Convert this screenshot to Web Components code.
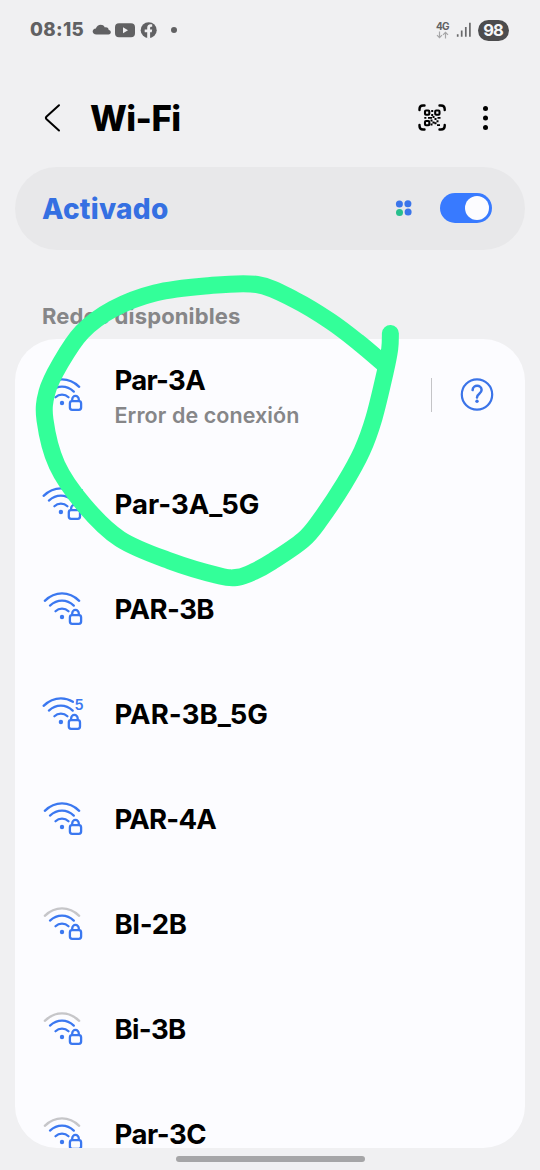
<!DOCTYPE html>
<html lang="es">
<head>
<meta charset="utf-8">
<title>Wi-Fi</title>
<style>
html,body{margin:0;padding:0;background:#f0f0f2}
body{font-family:Inter,"Noto Sans",sans-serif;overflow:hidden}
</style>
</head>
<body>
<wifi-screen></wifi-screen>
<script>
const define = (name, html, init) => customElements.define(name, class extends HTMLElement {
  connectedCallback() {
    if (this.shadowRoot) return;
    const t = document.createElement('template');
    t.innerHTML = typeof html === 'function' ? html(this) : html;
    this.attachShadow({ mode: 'open' }).append(t.content.cloneNode(true));
    if (init) init(this);
  }
});

/* A one-line label whose tracking is adjusted to take up the given width. */
define('fit-label', `<style>
:host{display:block;white-space:nowrap}
span{display:inline-block;white-space:nowrap}
</style><span><slot></slot></span>`, el => {
  const span = el.shadowRoot.querySelector('span');
  const want = +el.getAttribute('width');
  const n = el.textContent.length;
  const gap = (want - span.getBoundingClientRect().width) / n;
  span.style.letterSpacing = gap.toFixed(3) + 'px';
});

define('status-bar', `<style>
:host{display:flex;align-items:center;height:60px;box-sizing:border-box;padding:0 31px 0 30px;color:#616163}
fit-label{font-size:18.7px;font-weight:800;line-height:24px;width:54px}
.apps{margin-left:8px;flex:none}
.net{display:flex;flex-direction:column;align-items:center;margin-left:auto;width:14px}
.net fit-label{font-size:10px;font-weight:700;line-height:10px;width:13px}
.bars{margin-left:5px}
.battery{margin-left:6px;width:31.500px;height:21px;border-radius:11px;background:#4c4c4e;color:#f6f6f8;display:flex;justify-content:center;align-items:center}
.battery fit-label{font-size:16.500px;font-weight:700;line-height:21px;width:20px}
</style>
<fit-label width="54">08:15</fit-label>
<svg class="apps" width="90" height="24" viewBox="92 18 90 24" fill="#616163">
<path d="M96.5 34.500c-5 0-5-5.500-.6-5.900 1-4.200 7-5.200 9-1.200 2.500-.4 3.800 1 3.800 2.600 3 .5 2.700 4.500-.2 4.500z"/>
<path fill-rule="evenodd" d="M119 23.200h12q4 0 4 4v6q0 4-4 4h-12q-4 0-4-4v-6q0-4 4-4zM123 27.200v6l5-3z"/>
<circle cx="148.700" cy="30.200" r="8"/>
<path d="M147.200 38.500v-6.200h-2.500v-2.900h2.500v-1.500c0-2.900 1.700-4.100 5-3.500v2.400c-1.700-.1-2.100.3-2.100 1.300v1.300h2.100l-.5 2.900h-1.600v6.200z" fill="#f0f0f2"/>
<circle cx="174" cy="30" r="3"/>
</svg>
<div class="net"><fit-label width="13">4G</fit-label>
<svg width="14" height="8" viewBox="0 0 14 8" fill="none" stroke="#a6a6a8" stroke-width="1.200"><path d="M3.500.5v6M1 4.200l2.500 2.500L6 4.200M9.500 7.500v-6M7 3.800l2.500-2.500L12 3.800"/></svg></div>
<svg class="bars" width="17" height="18" viewBox="455 21 17 18" stroke-width="1.700" stroke="#68686a"><path d="M457.700 36.800v-2.600M461.700 36.800v-6.300M465.800 36.800V27M469.900 36.800V22.800"/></svg>
<div class="battery"><fit-label width="19.500">98</fit-label></div>`);

define('title-bar', `<style>
:host{display:flex;align-items:center;height:106.500px;padding:10px 40px 0 40px;box-sizing:border-box;color:#000}
fit-label{font-size:34.800px;font-weight:800;line-height:44px;margin-left:19px;width:92px}
.qr{margin-left:auto}
.more{margin-left:21px}
svg{flex:none}
div{display:flex;align-items:center;width:100%;height:44px}
</style><div>
<svg width="31" height="34" viewBox="40 101 31 34" fill="none" stroke="#000" stroke-width="2" stroke-linecap="round" stroke-linejoin="round"><path d="M59 105.200 46.600 116.500q-1.400 1.400 0 2.800L59 130.500"/></svg>
<fit-label width="90.500">Wi-Fi</fit-label>
<svg class="qr" width="34" height="34" viewBox="415 101 34 34" fill="none" stroke="#000" stroke-width="2.400" stroke-linecap="round">
<path d="M419.500 110v-1q0-3.500 3.500-3.500h1.500M439.500 105.500h1.500q3.700 0 3.700 3.500v1M444.700 125v1q0 3.500-3.700 3.500h-1.500M424.500 129.500H423q-3.500 0-3.500-3.500v-1"/>
<g stroke-width="2.100"><rect x="425" y="110.500" width="4.300" height="4.300" rx="1"/><rect x="435.200" y="110.500" width="4.300" height="4.300" rx="1"/><rect x="425" y="121" width="4.300" height="4.300" rx="1"/></g>
<g fill="#000" stroke="none"><path d="M431.200 110h2v2h-2zM431.200 114h2v2h-2zM424.300 117h2v1.800h-2zM428 117h4v1.800h-4zM432.500 116h2v2h-2zM434.500 118h2v2h-2zM437.500 117h3v1.800h-3zM430.500 119.500h2v2h-2zM432.500 121.500h2v2h-2zM436.500 120.300h2v2h-2zM434.500 122.300h2v2h-2zM430.500 123.500h2v2h-2zM437 124.200h3v1.800h-3z"/></g></svg>
<svg class="more" width="30" height="34" viewBox="470 101 30 34"><circle cx="485.500" cy="108.500" r="2.500"/><circle cx="485.500" cy="118" r="2.500"/><circle cx="485.500" cy="127.400" r="2.500"/></svg>
</div>`);

define('toggle-switch', `<style>
:host{display:flex;align-items:center;justify-content:flex-end;width:52.500px;height:30px;box-sizing:border-box;padding-right:3px;border-radius:15px;background:#387aff}
i{display:block;width:24px;height:24px;border-radius:50%;background:#fcfcff}
</style><i></i>`);

define('wifi-state', `<style>
:host{display:flex;align-items:center;margin:0 15px;height:83px;border-radius:41.500px;background:#e8e8ea;padding:0 33px 0 27px;box-sizing:border-box;color:#3570e2}
fit-label{font-size:28px;font-weight:800;line-height:40px;width:130px;padding-top:1px}
svg{margin-left:auto;margin-right:27px}
</style><fit-label width="126.500">Activado</fit-label>
<svg width="18" height="18" viewBox="395 199 18 18" fill="#3b75ea"><circle cx="399.400" cy="203.900" r="3.500"/><circle cx="407.900" cy="203.700" r="3.500"/><circle cx="399.500" cy="212.400" r="3.500" fill="#27bf8d"/><circle cx="408.100" cy="212.100" r="3.500"/></svg>
<toggle-switch></toggle-switch>`);

define('wifi-icon', el => {
  const five = el.hasAttribute('five');
  const top = el.hasAttribute('weak') ? '#c6c6c9' : '#3b78f0';
  return `<style>:host{display:block;width:46px;height:42px;flex:none}svg{display:block;overflow:visible}text{font:600 14.500px Inter,sans-serif}</style>
<svg width="46" height="42" viewBox="40 588 46 42" fill="none" stroke="#3b78f0" stroke-width="2.300" stroke-linecap="round" stroke-linejoin="round">
<g transform="translate(${five ? -1.1 : 0} 0)">
<path stroke="${top}" d="${five ? 'M44.700 600.800Q52.500 593.400 62 593.400Q68.500 593.400 74 596.800' : 'M44.800 600.800Q52.500 593.400 62 593.400T79.200 600.800'}"/>
<path d="M50 605.600Q55.500 600.700 62 600.700T73.800 605.600M55.500 611.300Q58.200 608.600 62 608.600T68.500 611.300"/>
<circle cx="62" cy="617" r="2.200" fill="#3b78f0" stroke="none"/>
<rect x="69.900" y="615.200" width="11.200" height="8.600" rx="2.200"/>
<path d="M72.200 614.800v-1.400a3.300 3.500 0 0 1 6.600 0v1.400"/></g>
${five ? '<text x="74.600" y="605" fill="#3b78f0" stroke="none">5</text>' : ''}
</svg>`;
});

define('wifi-row', el => `<style>
:host{display:flex;align-items:center;height:105px;box-sizing:border-box;padding:0 31px 0 25px;color:#000}
:host([tall]){height:112.500px}
.text{margin-left:28.500px;display:flex;flex-direction:column;flex:1}
.name{font-size:27.500px;font-weight:650;line-height:24px}
:host([tall]) .text{margin-top:11px;gap:6px}
</style>
<wifi-icon ${el.hasAttribute('five') ? 'five' : ''} ${el.hasAttribute('weak') ? 'weak' : ''}></wifi-icon>
<div class="text"><fit-label class="name" width="${el.getAttribute('w')}">${el.getAttribute('name')}</fit-label><slot></slot></div>
<slot name="end"></slot>`);

define('help-button', `<style>
:host{display:flex;align-items:center}
i{width:1px;height:34px;background:#c4c4c7;margin-right:28px;flex:none}
svg{display:block;flex:none}
</style><i></i>
<svg width="34" height="35" viewBox="460 377.500 34 35" fill="none" stroke="#3b74e8" stroke-width="2.200" stroke-linecap="round"><circle cx="477" cy="395" r="15.200"/><path stroke-width="2.500" d="M472.600 390.600c.2-5.800 9-5.600 9 0 0 3.700-4.600 3.500-4.600 7.300"/><circle cx="477" cy="401.700" r="1.700" fill="#3b74e8" stroke="none"/></svg>`);

define('network-list', `<style>
:host{display:block;margin:0 15px;height:809px;border-radius:42px;overflow:hidden;background:#fcfcff;width:509.500px}
.error{font-size:21.500px;font-weight:600;line-height:35px;color:#868688}
</style>
<wifi-row tall name="Par-3A" w="90.500"><fit-label class="error" width="185">Error de conexión</fit-label><help-button slot="end"></help-button></wifi-row>
<wifi-row five name="Par-3A_5G" w="145"></wifi-row>
<wifi-row name="PAR-3B" w="99.500"></wifi-row>
<wifi-row five name="PAR-3B_5G" w="153.500"></wifi-row>
<wifi-row name="PAR-4A" w="101.500"></wifi-row>
<wifi-row weak name="BI-2B" w="72"></wifi-row>
<wifi-row weak name="Bi-3B" w="71"></wifi-row>
<wifi-row weak name="Par-3C" w="91.500"></wifi-row>`);

/* Freehand marker line, smoothed through its sample points. */
define('marker-stroke', `<style>
:host{position:absolute;left:0;top:0;width:540px;height:1170px;pointer-events:none}
</style><svg width="540" height="1170" fill="none" stroke="#33ff99" stroke-width="17" stroke-linecap="round" stroke-linejoin="round"><path/></svg>`, el => {
  const p = [[384,364],[358,342],[330,321],[295,300],[257,284.5],[205,286],[155,293],[113,309],[82,332],[60,364],[47,392],[45,420],[57,465],[84,505],[120,539],[170,561],[220,576],[238,577.2],[254,571.5],[272,561.5],[303,540],[320,520],[344,484],[362,451],[374,418],[385.3,371.7],[389.7,349],[390.4,333.5]];
  let d = 'M' + p[0];
  for (let i = 0; i < p.length - 1; i++) {
    const a = p[i - 1] || p[i], b = p[i], c = p[i + 1], e = p[i + 2] || c;
    d += `C${b[0] + (c[0] - a[0]) / 6} ${b[1] + (c[1] - a[1]) / 6} ${c[0] - (e[0] - b[0]) / 6} ${c[1] - (e[1] - b[1]) / 6} ${c[0]} ${c[1]}`;
  }
  el.shadowRoot.querySelector('path').setAttribute('d', d);
});

define('wifi-screen', `<style>
:host{display:flex;flex-direction:column;position:relative;width:540px;height:1170px;overflow:hidden;background:#f0f0f2}
.heading{font-size:22px;font-weight:750;line-height:30px;color:#868688;margin:51px 0 8px 42px}
.home{width:189px;height:6px;border-radius:3px;background:#a5a5a7;margin:8.500px 0 0 175.500px}
:host>*{flex:none}
status-bar,title-bar,wifi-state,network-list{flex:none}
</style>
<status-bar></status-bar>
<title-bar></title-bar>
<wifi-state></wifi-state>
<fit-label class="heading" width="198.500">Redes disponibles</fit-label>
<network-list></network-list>
<div class="home"></div>
<marker-stroke></marker-stroke>`);
</script>
</body>
</html>
